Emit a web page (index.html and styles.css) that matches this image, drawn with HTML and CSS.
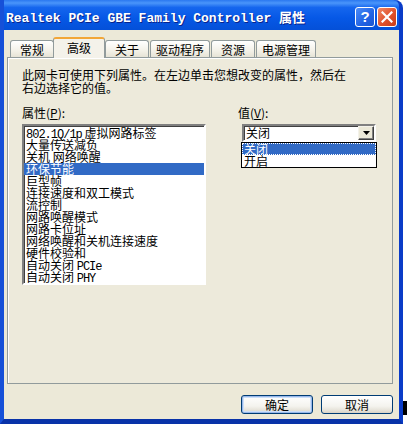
FILE: index.html
```html
<!DOCTYPE html>
<html>
  <head>
    <meta charset="UTF-8">
    <title>Realtek PCIe GBE Family Controller 属性</title>
    <link rel="stylesheet" href="styles.css">
  </head>
  <body>
    <div class="window">
      <div class="titlebar">
        <span class="title">Realtek PCIe GBE Family Controller 属性</span>
        <div class="title-buttons">
          <span class="tb-btn tb-help">?</span>
          <span class="tb-btn tb-close">
            <svg width="12" height="12" viewBox="0 0 12 12">
              <path d="M1.5 1.5 L10.5 10.5 M10.5 1.5 L1.5 10.5" stroke="#FFFFFF" stroke-width="2.2" stroke-linecap="square"/>
            </svg>
          </span>
        </div>
      </div>
      <div class="client">
        <div class="tabs">
          <div class="tab">常规</div>
          <div class="tab active">高级</div>
          <div class="tab">关于</div>
          <div class="tab long">驱动程序</div>
          <div class="tab">资源</div>
          <div class="tab long">电源管理</div>
        </div>
        <div class="panel">
          <p class="desc">此网卡可使用下列属性。在左边单击您想改变的属性，然后在<br>右边选择它的值。</p>
          <div class="props">
            <div class="prop-col">
              <label class="field-label">属性(<u>P</u>):</label>
              <ul class="listbox">
                <li><span class="mono">802.1Q/1p</span> 虚拟网路标签</li>
                <li>大量传送减负</li>
                <li>关机 网络唤醒</li>
                <li class="selected">环保节能</li>
                <li>巨型帧</li>
                <li>连接速度和双工模式</li>
                <li>流控制</li>
                <li>网路唤醒模式</li>
                <li>网路卡位址</li>
                <li>网络唤醒和关机连接速度</li>
                <li>硬件校验和</li>
                <li>自动关闭 <span class="mono">PCIe</span></li>
                <li>自动关闭 <span class="mono">PHY</span></li>
              </ul>
            </div>
            <div class="value-col">
              <label class="field-label">值(<u>V</u>):</label>
              <div class="combo">
                <span class="combo-text">关闭</span>
                <span class="combo-arrow">
                  <svg width="7" height="4" viewBox="0 0 7 4"><path d="M0 0 H7 L3.5 4 Z" fill="#000000"/></svg>
                </span>
                <ul class="dropdown">
                  <li class="selected">关闭</li>
                  <li>开启</li>
                </ul>
              </div>
            </div>
          </div>
        </div>
        <div class="actions">
          <button class="btn default">确定</button>
          <button class="btn">取消</button>
        </div>
      </div>
    </div>
    <div class="cursor-mark"></div>
  </body>
</html>
```

FILE: styles.css
```css
body {
  margin: 0;
  background-color: #FFFFFF;
  display: flex;
  align-items: flex-start;
  font-family: "Noto Sans CJK SC", sans-serif;
  font-size: 12px;
  color: #000000;
}

.window {
  width: 403px;
  height: 424px;
  box-sizing: border-box;
  display: flex;
  flex-direction: column;
  border-left: 4px solid #1650D8;
  border-right: 4px solid #0A3CC8;
  border-bottom: 5px solid #0832A8;
  border-top-right-radius: 8px;
  background-color: #0A48D8;
}

.titlebar {
  height: 30px;
  box-sizing: border-box;
  display: flex;
  align-items: center;
  justify-content: space-between;
  padding: 3px 2px 0 2px;
  background: linear-gradient(to bottom, #2A78F0 0%, #4A95FA 10%, #1566EE 25%, #0658E6 60%, #0450D8 100%);
  border-top-right-radius: 6px;
}

.title {
  font-family: "Liberation Mono", "Noto Sans CJK SC", monospace;
  font-weight: bold;
  font-size: 13px;
  color: #FFFFFF;
  text-shadow: 1px 1px 0 #0A248C;
  white-space: nowrap;
}

.title-buttons {
  display: flex;
  gap: 2px;
}

.tb-btn {
  width: 20px;
  height: 20px;
  box-sizing: border-box;
  display: flex;
  align-items: center;
  justify-content: center;
  border: 1px solid #FFFFFF;
  border-radius: 3px;
}

.tb-help {
  background: linear-gradient(135deg, #4C8CF8, #2163E4 60%, #1A55D0);
  color: #FFFFFF;
  font-family: "Liberation Sans", sans-serif;
  font-weight: bold;
  font-size: 15px;
}

.tb-close {
  background: linear-gradient(135deg, #F08A66, #E0512C 55%, #C83C18);
}

.client {
  flex: 1;
  display: flex;
  flex-direction: column;
  padding: 7px 6px 5px 3px;
  background-color: #ECE9D8;
}

.tabs {
  display: flex;
  align-items: flex-end;
  gap: 1px;
  height: 21px;
  margin: 0 0 -1px 3px;
  position: relative;
  z-index: 1;
}

.tab {
  height: 16px;
  line-height: 17px;
  margin-bottom: 1px;
  padding: 0 9px;
  border: 1px solid #919B9C;
  border-bottom: none;
  border-radius: 3px 3px 0 0;
  background: linear-gradient(to bottom, #FFFFFF, #F3F1E8 60%, #E6E3D6);
}

.tab.long {
  padding: 0 5px;
}

.tab.active {
  height: 19px;
  line-height: 18px;
  margin: 0 -1px 0 -2px;
  padding: 0 13px;
  border-top: 2px solid #F2A637;
  background: #F4F2EA;
}

.panel {
  flex: 1;
  border: 1px solid #919B9C;
  box-shadow: inset 1px 1px 0 #FFFFFF;
  padding: 10px 14px;
  background-color: #EDEADB;
}

.desc {
  margin: 0;
  line-height: 13px;
}

.props {
  display: flex;
  gap: 32px;
  margin-top: 12px;
}

.field-label {
  display: block;
  line-height: 13px;
  margin-bottom: 5px;
}

.mono {
  font-family: "Liberation Mono", monospace;
  font-size: 12px;
  letter-spacing: -1px;
}

.listbox {
  width: 184px;
  height: 161px;
  box-sizing: border-box;
  margin: 0;
  padding: 1px 0 0 0;
  list-style: none;
  background-color: #FFFFFF;
  border-style: solid;
  border-width: 2px;
  border-color: #808080 #FFFFFF #FFFFFF #808080;
  box-shadow: inset 1px 1px 0 #404040;
  overflow: hidden;
}

.listbox li {
  height: 12px;
  line-height: 12px;
  padding-left: 2px;
  white-space: nowrap;
}

.listbox li.selected,
.dropdown li.selected {
  background-color: #316AC5;
  color: #FFFFFF;
}

.combo {
  position: relative;
  width: 134px;
  height: 18px;
  box-sizing: border-box;
  margin-left: 4px;
  display: flex;
  align-items: center;
  justify-content: space-between;
  background-color: #FFFFFF;
  border-style: solid;
  border-width: 2px;
  border-color: #808080 #FFFFFF #FFFFFF #808080;
  box-shadow: inset 1px 1px 0 #404040;
}

.combo-text {
  padding-left: 2px;
  line-height: 12px;
}

.combo-arrow {
  width: 16px;
  height: 14px;
  box-sizing: border-box;
  display: flex;
  align-items: center;
  justify-content: center;
  background-color: #ECE9D8;
  border-style: solid;
  border-width: 1px;
  border-color: #F4F2EA #404040 #404040 #F4F2EA;
  box-shadow: inset -1px -1px 0 #808080;
}

.dropdown {
  position: absolute;
  top: 16px;
  left: -3px;
  width: 136px;
  box-sizing: border-box;
  margin: 0;
  padding: 0;
  list-style: none;
  border: 1px solid #000000;
  background-color: #FFFFFF;
}

.dropdown li {
  height: 12px;
  line-height: 12px;
  padding-left: 2px;
}

.dropdown li.selected {
  outline: 1px dotted #FFFFFF;
  outline-offset: -1px;
}

.actions {
  display: flex;
  justify-content: flex-end;
  gap: 8px;
  margin-top: 11px;
}

.btn {
  width: 72px;
  height: 19px;
  padding: 0;
  font-family: "Noto Sans CJK SC", sans-serif;
  font-size: 12px;
  line-height: 12px;
  color: #000000;
  border: 1px solid #003C74;
  border-radius: 3px;
  background: linear-gradient(to bottom, #FFFFFF, #F4F3EE 60%, #E2DED3 90%, #D6D0C5);
}

.btn.default {
  box-shadow: inset 0 0 0 1px #98B8EA, inset 0 0 0 2px #CEE0F8;
}

.cursor-mark {
  width: 4px;
  height: 14px;
  margin-top: 401px;
  background-color: #000000;
}
```
